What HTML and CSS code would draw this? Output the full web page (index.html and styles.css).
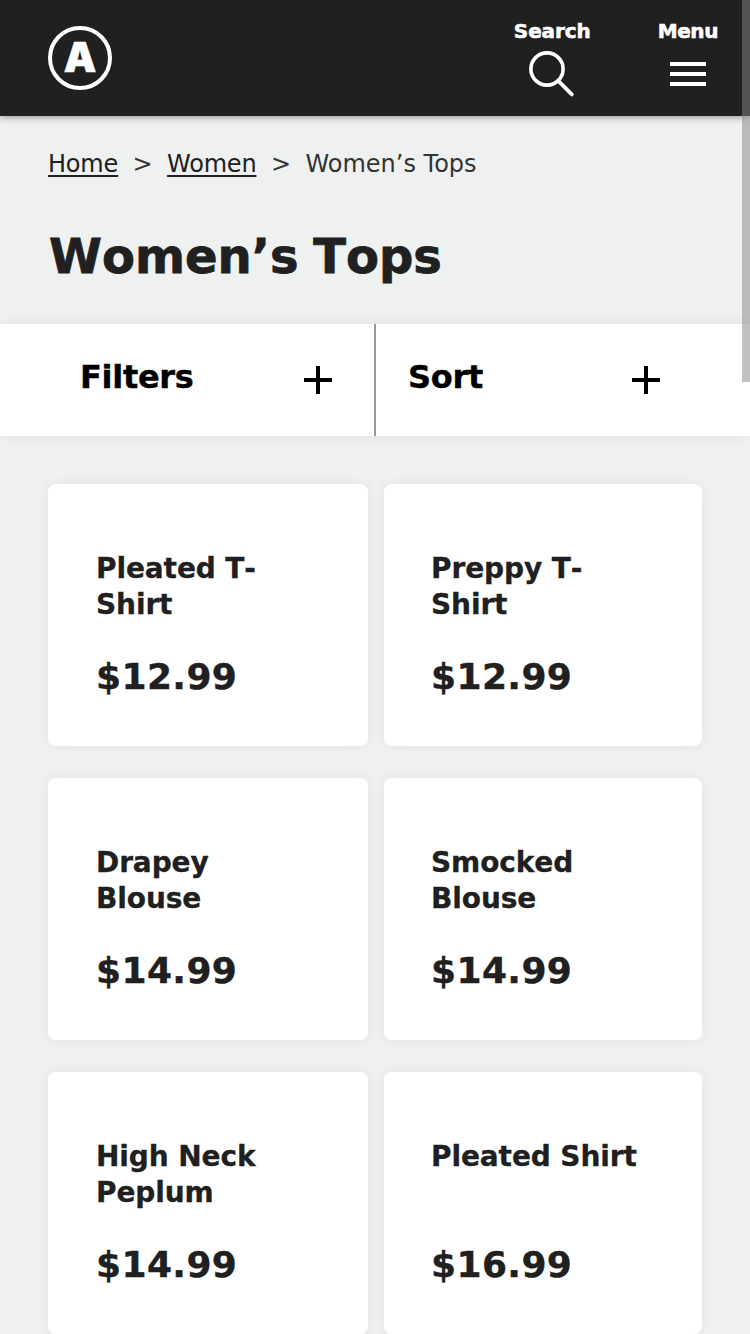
FILE: index.html
```html
<!DOCTYPE html>
<html lang="en">
<head>
<meta charset="utf-8">
<title>Women’s Tops</title>
<link rel="stylesheet" href="styles.css">
</head>
<body>
<header class="header">
  <a class="logo">A</a>
  <nav class="actions">
    <a class="action search">
      <span>Search</span>
      <svg width="48" height="50" viewBox="0 0 48 50" fill="none" stroke="#fff" stroke-linecap="round"><circle cx="20" cy="20" r="16.1" stroke-width="3.6"/><path d="M31.3 31.8L44.8 45.4" stroke-width="3.8"/></svg>
    </a>
    <a class="action menu">
      <span>Menu</span>
      <svg width="36" height="24" viewBox="0 0 36 24" fill="#fff"><path d="M0 0h36v4H0zM0 10h36v4H0zM0 20h36v4H0z"/></svg>
    </a>
  </nav>
</header>
<main>
  <nav class="crumbs">
    <a>Home</a><span class="sep">&gt;</span><a>Women</a><span class="sep">&gt;</span><span class="current">Women’s Tops</span>
  </nav>
  <h1 class="title">Women’s Tops</h1>
  <section class="tools">
    <div class="tool filters"><span>Filters</span><svg class="plus" width="28" height="28" viewBox="0 0 28 28"><path d="M12 0h4v12h12v4H16v12h-4V16H0v-4h12z"/></svg></div>
    <div class="tool sort"><span>Sort</span><svg class="plus" width="28" height="28" viewBox="0 0 28 28"><path d="M12 0h4v12h12v4H16v12h-4V16H0v-4h12z"/></svg></div>
  </section>
  <section class="grid">
    <article class="card"><h2 class="name">Pleated T-<br>Shirt</h2><p class="price">$12.99</p></article>
    <article class="card"><h2 class="name">Preppy T-<br>Shirt</h2><p class="price">$12.99</p></article>
    <article class="card"><h2 class="name">Drapey<br>Blouse</h2><p class="price">$14.99</p></article>
    <article class="card"><h2 class="name">Smocked<br>Blouse</h2><p class="price">$14.99</p></article>
    <article class="card"><h2 class="name">High Neck<br>Peplum</h2><p class="price">$14.99</p></article>
    <article class="card"><h2 class="name">Pleated Shirt</h2><p class="price">$16.99</p></article>
  </section>
</main>
<div class="scrollbar"></div>
</body>
</html>
```
FILE: styles.css
```css
* { box-sizing: border-box; }
body {
  margin: 0;
  height: 1334px;
  overflow: hidden;
  background: #eff1f1;
  color: #202020;
  font-family: Verdana, "DejaVu Sans", sans-serif;
}
.header {
  display: flex;
  justify-content: space-between;
  align-items: flex-start;
  height: 116px;
  padding: 0 32px 0 48px;
  background: #202020;
  color: #fff;
  box-shadow: 0 0 8px rgba(0, 0, 0, .5);
}
.logo {
  width: 64px;
  height: 64px;
  margin-top: 26px;
  border: 4px solid #fff;
  border-radius: 50%;
  font: 900 41px/54px Inter, sans-serif;
  text-align: center;
  -webkit-text-stroke: .5px #fff;
}
.actions { display: flex; gap: 67px; padding-top: 19px; }
.action {
  display: flex;
  flex-direction: column;
  align-items: center;
  font-size: 20px;
  line-height: 24px;
  font-weight: bold;
}
.action span { -webkit-text-stroke: .6px #fff; }
.search span { letter-spacing: -.1px; }
.search svg { margin: 6px 2px 0 0; }
.menu { letter-spacing: -.4px; }
.menu svg { margin-top: 19px; }
.crumbs {
  display: flex;
  padding: 32px 48px 0;
  font-size: 24px;
  line-height: 32px;
  letter-spacing: -.2px;
  color: #333;
}
.crumbs a {
  color: #202020;
  text-decoration: underline;
  text-decoration-thickness: 2px;
  text-underline-offset: 3px;
  text-decoration-skip-ink: none;
}
.sep { width: 49px; text-align: center; }
.current { letter-spacing: 0; }
.title {
  margin: 44px 0 0;
  padding-left: 49px;
  font-size: 48px;
  line-height: 64px;
  font-kerning: none;
  word-spacing: -2px;
  -webkit-text-stroke: .8px #202020;
}
.tools {
  display: flex;
  height: 112px;
  margin-top: 36px;
  background: #fff;
  color: #000;
  box-shadow: 0 0 12px rgba(0, 0, 0, .06);
}
.tool {
  display: flex;
  justify-content: space-between;
  align-items: flex-start;
  font-size: 32px;
  line-height: 40px;
  font-weight: bold;
  padding-top: 33px;
}
.tool span { letter-spacing: -.3px; -webkit-text-stroke: .4px #000; }
.filters { width: 376px; padding-left: 80px; padding-right: 42px; border-right: 2px solid #999; }
.sort { flex: 1; padding-left: 32px; padding-right: 90px; }
.plus { margin-top: 9px; }
.grid {
  display: grid;
  grid-template-columns: 320px 318px;
  grid-auto-rows: 262px;
  gap: 32px 16px;
  padding: 48px;
}
.card {
  display: flex;
  flex-direction: column;
  justify-content: space-between;
  padding: 67px 20px 45px 48px;
  background: #fff;
  border-radius: 8px;
  box-shadow: 0 0 12px rgba(0, 0, 0, .06);
}
.card:nth-child(even) { padding-left: 47px; }
.name {
  margin: 0;
  font-size: 28px;
  line-height: 36px;
  font-kerning: none;
  letter-spacing: -.1px;
  -webkit-text-stroke: .3px #202020;
}
.price {
  margin: 0;
  font-size: 36px;
  line-height: 48px;
  font-weight: bold;
  letter-spacing: .4px;
  -webkit-text-stroke: .4px #202020;
}
.scrollbar {
  position: absolute;
  top: 0;
  right: 0;
  width: 8px;
  height: 382px;
  background: rgba(132, 132, 132, .5);
}
```
